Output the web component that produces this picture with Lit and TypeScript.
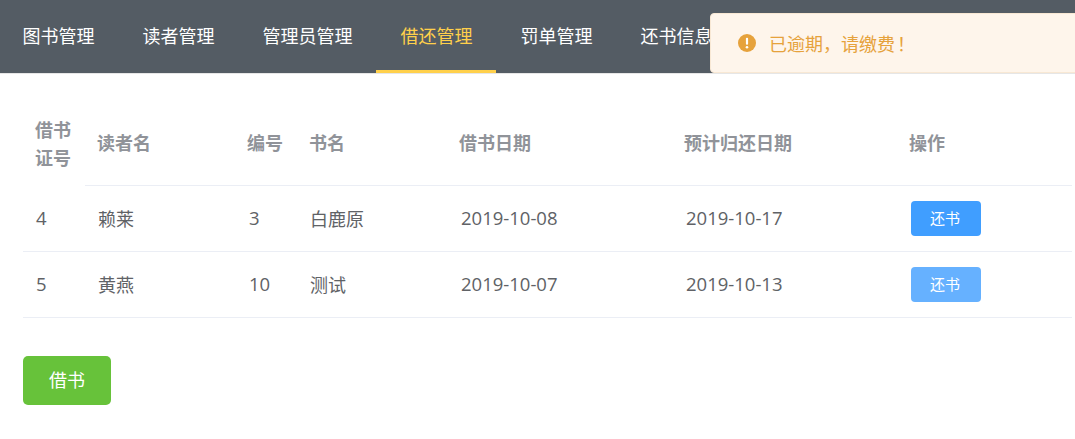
import { LitElement, html, css } from "lit";
import { customElement } from "lit/decorators.js";

const NAV = [
  { label: "图书管理" },
  { label: "读者管理" },
  { label: "管理员管理" },
  { label: "借还管理", active: true },
  { label: "罚单管理" },
  { label: "还书信息" },
];
const ROWS = [
  { id: "4", name: "赖莱", no: "3", book: "白鹿原", from: "2019-10-08", to: "2019-10-17", hover: false },
  { id: "5", name: "黄燕", no: "10", book: "测试", from: "2019-10-07", to: "2019-10-13", hover: true },
];

@customElement("app-root")
export class AppRoot extends LitElement {
  static styles = css`
    :host {
      display: block;
      position: relative;
      width: 1075px;
      height: 439px;
      overflow: hidden;
      background: #fff;
      font-family: "Noto Sans CJK SC", "Noto Sans", sans-serif;
    }
    nav {
      display: flex;
      height: 73px;
      background: #545c64;
      border-bottom: 1px solid #e6e6e6;
      overflow: hidden;
    }
    .item {
      box-sizing: border-box;
      height: 73px;
      padding: 0 23.5px 0 24.5px;
      font-size: 18px;
      line-height: 70px;
      color: #fff;
      white-space: nowrap;
      flex: none;
    }
    .item:first-child { margin-left: -2px; }
    .item.active {
      color: #ffd04b;
      border-bottom: 3px solid #ffd04b;
    }
    .content { padding: 28px 3px 0 23px; }
    table {
      width: 1049px;
      border-collapse: collapse;
      table-layout: fixed;
    }
    th, td {
      text-align: left;
      font-size: 18px;
      box-sizing: border-box;
    }
    th {
      height: 83px;
      padding: 0 12px 2px 12px;
      color: #909399;
      font-weight: 700;
      line-height: 28px;
      border-bottom: 1px solid #ebeef5;
    }
    th.first { border-bottom: 0; padding-right: 10px; }
    td {
      height: 66px;
      padding: 0 12px 1px 13px;
      color: #606266;
      border-bottom: 1px solid #ebeef5;
    }
    td.num {
      padding-left: 14px;
      font-family: "Open Sans", sans-serif;
      font-size: 18.5px;
    }
    td.num.id { padding-left: 13px; }
    td.action { padding-left: 14px; padding-bottom: 0; }
    .mini {
      display: block;
      width: 70px;
      height: 35px;
      border: 0;
      padding: 0 2px 1px 0;
      border-radius: 4px;
      background: #409eff;
      color: #fff;
      font: 15px "Noto Sans CJK SC", sans-serif;
    }
    .mini.hover { background: #66b1ff; }
    .borrow {
      display: block;
      margin-top: 38px;
      width: 88px;
      height: 49px;
      border: 0;
      padding: 0 0 2px;
      border-radius: 5px;
      background: #67c23a;
      color: #fff;
      font: 18px "Noto Sans CJK SC", sans-serif;
    }
    .message {
      position: absolute;
      left: 710px;
      top: 13px;
      width: 420px;
      height: 60px;
      box-sizing: border-box;
      display: flex;
      align-items: center;
      gap: 13px;
      padding: 0 0 1px 27px;
      background: #fef5eb;
      border: 1px solid #f8e8d4;
      border-radius: 4px;
      color: #e6a23c;
      font-size: 18px;
    }
    .message svg { width: 18px; height: 18px; flex: none; }
    .bang { margin-left: 2px; }
  `;

  render() {
    return html`
      <nav>
        ${NAV.map((n) => html`<div class="item ${n.active ? "active" : ""}">${n.label}</div>`)}
      </nav>
      <div class="content">
        <table>
          <colgroup>
            <col style="width:62px" /><col style="width:150px" /><col style="width:62px" />
            <col style="width:150px" /><col style="width:225px" /><col style="width:225px" /><col style="width:175px" />
          </colgroup>
          <thead>
            <tr>
              <th class="first">借书证号</th>
              <th>读者名</th>
              <th>编号</th>
              <th>书名</th>
              <th>借书日期</th>
              <th>预计归还日期</th>
              <th>操作</th>
            </tr>
          </thead>
          <tbody>
            ${ROWS.map(
              (r) => html`<tr>
                <td class="num id">${r.id}</td>
                <td>${r.name}</td>
                <td class="num">${r.no}</td>
                <td>${r.book}</td>
                <td class="num">${r.from}</td>
                <td class="num">${r.to}</td>
                <td class="action"><button class="mini ${r.hover ? "hover" : ""}">还书</button></td>
              </tr>`
            )}
          </tbody>
        </table>
        <button class="borrow">借书</button>
      </div>
      <div class="message">
        <svg viewBox="0 0 18 18"><circle cx="9" cy="9" r="9" fill="#e6a23c"></circle><rect x="7.9" y="3.8" width="2.2" height="7" rx="1" fill="#fff"></rect><circle cx="9" cy="13.2" r="1.3" fill="#fff"></circle></svg>
        <span>已逾期，请缴费<span class="bang">！</span></span>
      </div>
    `;
  }
}
